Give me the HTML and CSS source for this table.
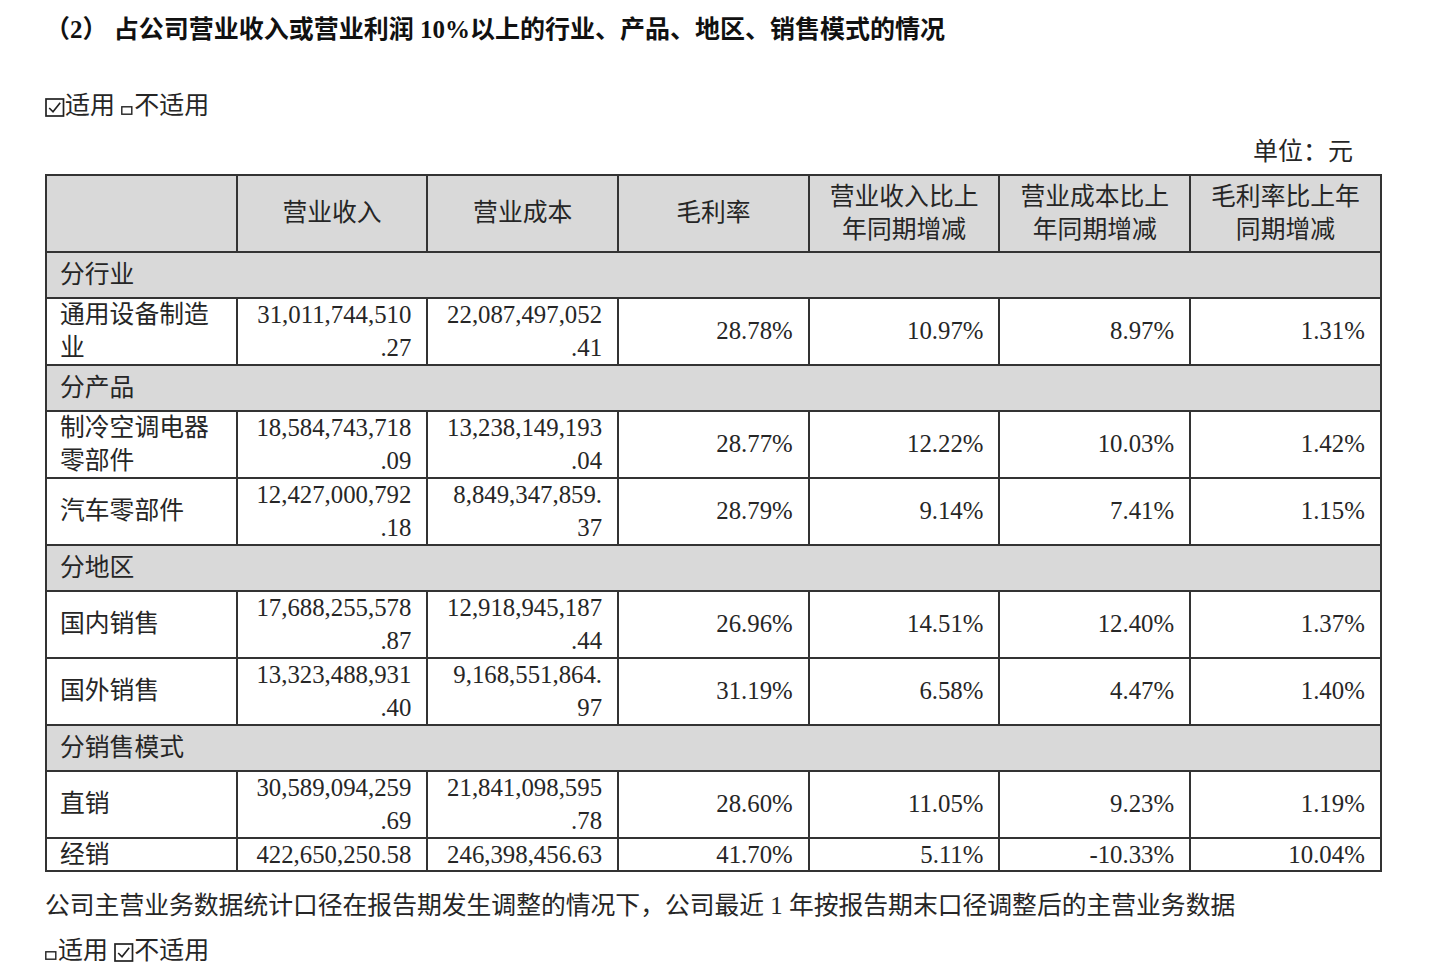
FILE: index.html
```html
<!DOCTYPE html>
<html lang="zh-CN">
<head>
<meta charset="utf-8">
<title>占公司营业收入或营业利润10%以上的情况</title>
<link rel="stylesheet" href="styles.css">
</head>
<body>
<div class="page">
  <h2 class="title">（2） 占公司营业收入或营业利润 10%以上的行业、产品、地区、销售模式的情况</h2>
  <p class="opt opt-top"><svg class="chk" viewBox="0 0 20 19" width="20" height="19"><rect x="1" y="1" width="17.5" height="17" fill="none" stroke="#222" stroke-width="1.7"/><path d="M4.2 10 L8 13.8 L15.2 4.8" fill="none" stroke="#222" stroke-width="1.7"/></svg>适用 <svg class="box" viewBox="0 0 12 9" width="12" height="9"><rect x="0.8" y="0.8" width="10" height="7.4" fill="none" stroke="#222" stroke-width="1.4"/></svg>不适用</p>
  <p class="unit">单位：元</p>
  <table class="tbl">
    <colgroup>
      <col><col><col><col><col><col><col>
    </colgroup>
    <tr class="head">
      <td></td>
      <td>营业收入</td>
      <td>营业成本</td>
      <td>毛利率</td>
      <td>营业收入比上<br>年同期增减</td>
      <td>营业成本比上<br>年同期增减</td>
      <td>毛利率比上年<br>同期增减</td>
    </tr>
    <tr class="sec"><td colspan="7">分行业</td></tr>
    <tr class="row">
      <td class="name">通用设备制造<br>业</td>
      <td class="num">31,011,744,510<br>.27</td>
      <td class="num">22,087,497,052<br>.41</td>
      <td class="num">28.78%</td>
      <td class="num">10.97%</td>
      <td class="num">8.97%</td>
      <td class="num">1.31%</td>
    </tr>
    <tr class="sec"><td colspan="7">分产品</td></tr>
    <tr class="row">
      <td class="name">制冷空调电器<br>零部件</td>
      <td class="num">18,584,743,718<br>.09</td>
      <td class="num">13,238,149,193<br>.04</td>
      <td class="num">28.77%</td>
      <td class="num">12.22%</td>
      <td class="num">10.03%</td>
      <td class="num">1.42%</td>
    </tr>
    <tr class="row">
      <td class="name">汽车零部件</td>
      <td class="num">12,427,000,792<br>.18</td>
      <td class="num">8,849,347,859.<br>37</td>
      <td class="num">28.79%</td>
      <td class="num">9.14%</td>
      <td class="num">7.41%</td>
      <td class="num">1.15%</td>
    </tr>
    <tr class="sec"><td colspan="7">分地区</td></tr>
    <tr class="row">
      <td class="name">国内销售</td>
      <td class="num">17,688,255,578<br>.87</td>
      <td class="num">12,918,945,187<br>.44</td>
      <td class="num">26.96%</td>
      <td class="num">14.51%</td>
      <td class="num">12.40%</td>
      <td class="num">1.37%</td>
    </tr>
    <tr class="row">
      <td class="name">国外销售</td>
      <td class="num">13,323,488,931<br>.40</td>
      <td class="num">9,168,551,864.<br>97</td>
      <td class="num">31.19%</td>
      <td class="num">6.58%</td>
      <td class="num">4.47%</td>
      <td class="num">1.40%</td>
    </tr>
    <tr class="sec"><td colspan="7">分销售模式</td></tr>
    <tr class="row">
      <td class="name">直销</td>
      <td class="num">30,589,094,259<br>.69</td>
      <td class="num">21,841,098,595<br>.78</td>
      <td class="num">28.60%</td>
      <td class="num">11.05%</td>
      <td class="num">9.23%</td>
      <td class="num">1.19%</td>
    </tr>
    <tr class="row last">
      <td class="name">经销</td>
      <td class="num">422,650,250.58</td>
      <td class="num">246,398,456.63</td>
      <td class="num">41.70%</td>
      <td class="num">5.11%</td>
      <td class="num">-10.33%</td>
      <td class="num">10.04%</td>
    </tr>
  </table>
  <p class="note">公司主营业务数据统计口径在报告期发生调整的情况下，公司最近 1 年按报告期末口径调整后的主营业务数据</p>
  <p class="opt opt-bottom"><svg class="box" viewBox="0 0 12 9" width="12" height="9"><rect x="0.8" y="0.8" width="10" height="7.4" fill="none" stroke="#222" stroke-width="1.4"/></svg>适用 <svg class="chk" viewBox="0 0 20 19" width="20" height="19"><rect x="1" y="1" width="17.5" height="17" fill="none" stroke="#222" stroke-width="1.7"/><path d="M4.2 10 L8 13.8 L15.2 4.8" fill="none" stroke="#222" stroke-width="1.7"/></svg>不适用</p>
</div>
</body>
</html>
```

FILE: styles.css
```css
html, body {
  margin: 0;
  padding: 0;
  background: #ffffff;
}

body {
  font-family: "Liberation Serif", "Noto Sans CJK SC", serif;
  color: #262626;
  font-size: 25px;
}

.page {
  padding: 12px 0 0 45px;
  width: 1340px;
}

.title {
  margin: 0;
  font-size: 25px;
  line-height: 36px;
  font-weight: bold;
  color: #111;
}

.opt {
  margin: 0;
  line-height: 36px;
  font-size: 25px;
}

.opt-top {
  margin-top: 40px;
}

.opt-bottom {
  margin-top: 9px;
}

.chk {
  vertical-align: -3px;
  margin-right: 0;
}

.box {
  vertical-align: -1px;
  margin-right: 1px;
}

.unit {
  margin: 10px 0 0 0;
  line-height: 36px;
  text-align: right;
  padding-right: 32px;
  font-size: 25px;
}

.tbl {
  margin-top: 4px;
  border-collapse: collapse;
  table-layout: fixed;
  width: 1335px;
  border: 2px solid #333;
  font-size: 24.8px;
}

.tbl col {
  width: 190.7px;
}

.tbl td {
  border: 2px solid #333;
  padding: 0 15px 0 13px;
  line-height: 32.5px;
  vertical-align: middle;
  white-space: nowrap;
}

.head td {
  background: #d9d9d9;
  text-align: center;
  height: 65px;
  padding-top: 5px;
  padding-bottom: 5px;
  padding-left: 4px;
  padding-right: 4px;
}

.sec td {
  background: #d9d9d9;
  height: 32px;
  line-height: 32px;
  padding-top: 6px;
  padding-bottom: 6px;
}

.row td {
  height: 65px;
}

.row.last td {
  height: 31px;
  line-height: 31px;
}

.name {
  text-align: left;
}

.num {
  text-align: right;
}

.note {
  margin: 16px 0 0 0;
  line-height: 36px;
  font-size: 24.8px;
}
```
